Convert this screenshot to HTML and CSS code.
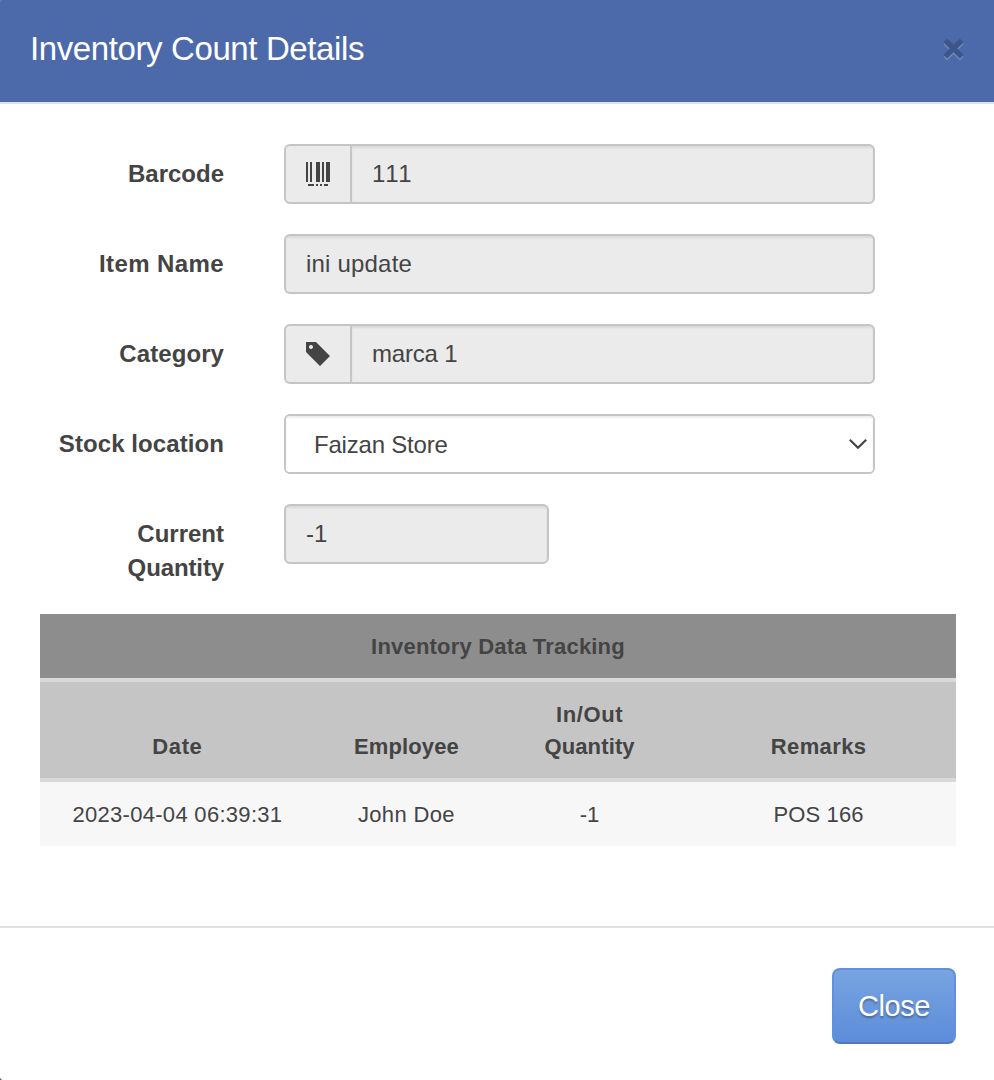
FILE: index.html
```html
<!DOCTYPE html>
<html lang="en">
<head>
<meta charset="utf-8">
<title>Inventory Count Details</title>
<link rel="stylesheet" href="styles.css">
</head>
<body>
<div class="modal">
  <header class="modal-header">
    <h1 class="modal-title">Inventory Count Details</h1>
    <button class="dismiss" type="button" aria-label="Dismiss">
      <svg width="26" height="26" viewBox="0 0 26 26"><path class="cross-light" d="M4.3 6.3l16.4 16.4m0-16.4l-16.4 16.4"/><path class="cross" d="M4.3 4.3l16.4 16.4m0-16.4l-16.4 16.4"/></svg>
    </button>
  </header>
  <main class="modal-body">
    <div class="row">
      <label class="label">Barcode</label>
      <div class="group">
        <span class="addon"><svg width="24" height="24" viewBox="0 0 24 24" shape-rendering="crispEdges"><path d="M0 0h2v20H0zM4 0h2v20H4zM10 0h4v20h-4zM16 0h2v20h-2zM20 0h4v20h-4zM2 22h6v2H2zM10 22h2v2h-2zM14 22h2v2h-2zM18 22h4v2h-4z"/></svg></span>
        <div class="field"><span class="v-code">111</span></div>
      </div>
    </div>
    <div class="row">
      <label class="label"><span class="l-item">Item Name</span></label>
      <div class="group"><div class="field"><span class="v-item">ini update</span></div></div>
    </div>
    <div class="row">
      <label class="label"><span class="l-category">Category</span></label>
      <div class="group">
        <span class="addon"><svg width="24" height="24" viewBox="0 0 24 24"><path fill-rule="evenodd" d="M0 0h10l14 14-10 10L0 10zM5 3a2 2 0 1 0 .01 0z"/></svg></span>
        <div class="field"><span class="v-category">marca 1</span></div>
      </div>
    </div>
    <div class="row">
      <label class="label"><span class="l-category">Stock location</span></label>
      <div class="group"><div class="field select"><span class="v-store">Faizan Store</span>
        <svg width="20" height="12" viewBox="0 0 20 12"><path d="M1.8 1.8L10 9.8l8.2-8"/></svg></div></div>
    </div>
    <div class="row">
      <label class="label">Current<br><span class="l-quantity">Quantity</span></label>
      <div class="group narrow"><div class="field">-1</div></div>
    </div>
    <table class="tracking">
      <colgroup><col class="wide"><col class="slim"><col class="slim"><col class="wide"></colgroup>
      <thead>
        <tr class="caption"><th colspan="4"><span class="t-title">Inventory Data Tracking</span></th></tr>
        <tr class="columns">
          <th><span class="t-date">Date</span></th>
          <th><span class="t-employee">Employee</span></th>
          <th><span class="t-inout">In/Out</span><br><span class="t-employee">Quantity</span></th>
          <th><span class="t-remarks">Remarks</span></th>
        </tr>
      </thead>
      <tbody>
        <tr><td><span class="d-date">2023-04-04 06:39:31</span></td><td><span class="d-name">John Doe</span></td><td>-1</td><td><span class="d-remark">POS 166</span></td></tr>
      </tbody>
    </table>
  </main>
  <footer class="modal-footer"><button class="close" type="button">Close</button></footer>
</div>
</body>
</html>
```
FILE: styles.css
```css
* { box-sizing: border-box; }
body { margin: 0; background: #444; color: #444; font: 24px/34px "Liberation Sans", Arial, sans-serif; }
.modal { height: 1080px; background: #fff; border-radius: 2px 0 0 3px; overflow: hidden; }
.modal-header { height: 104px; padding: 0 27px 5px 30px; display: flex; align-items: center; justify-content: space-between; background: #4c6aaa; border-bottom: 2px solid #e1e1e1; }
.modal-title { margin: 0; color: #fff; font-size: 33px; line-height: 44px; font-weight: 400; letter-spacing: -.39px; }
.dismiss { display: flex; padding: 0; border: 0; background: none; }
.dismiss path { fill: none; stroke-width: 5.2; }
.cross { stroke: #3d5588; }
.cross-light { stroke: #7088bb; }
.modal-body { height: 822px; padding: 40px 38px 0 40px; }
.row { display: flex; min-height: 60px; margin-bottom: 30px; }
.label { width: 184px; margin-right: 60px; padding-top: 13px; text-align: right; font-weight: 700; }
.group { display: flex; width: 591px; height: 60px; border: 2px solid #c5c5c5; border-radius: 6px; background: #ebebeb; overflow: hidden; }
.narrow { width: 265px; }
.addon { width: 66px; padding-right: 1px; display: flex; align-items: center; justify-content: center; border-right: 2px solid #c5c5c5; fill: #444; }
.field { flex: 1; padding: 11px 20px; box-shadow: inset 0 2px 2px rgba(0,0,0,.075); }
.select { display: flex; align-items: center; justify-content: space-between; padding: 0 5px 0 28px; background: #fff; }
.select path { fill: none; stroke: #444; stroke-width: 2.2; }
.l-item { letter-spacing: .4px; }
.l-category { letter-spacing: .08px; }
.l-quantity { letter-spacing: -.12px; }
.v-code { letter-spacing: -.2px; font-kerning: none; }
.v-item { letter-spacing: .2px; }
.v-category { letter-spacing: -.2px; }
.v-store { padding-top: 2px; letter-spacing: -.2px; }
.tracking { width: 916px; border-collapse: separate; border-spacing: 0; table-layout: fixed; margin-top: -1px; text-align: center; font-size: 22px; line-height: 32px; }
.tracking th, .tracking td { padding: 17px 0 15px; }
.tracking th { vertical-align: bottom; border-bottom: 4px solid #d9d9d9; background-clip: padding-box; }
.caption th { background: #8d8d8d; }
.columns th { background: #c5c5c5; }
.wide { width: 30%; }
.slim { width: 20%; }
.tracking td { background: #f7f7f7; }
.t-title { letter-spacing: .19px; }
.t-date { letter-spacing: .6px; }
.t-employee { letter-spacing: .13px; }
.t-inout { letter-spacing: .6px; }
.t-remarks { letter-spacing: .4px; }
.d-date { letter-spacing: .3px; }
.d-name { letter-spacing: .35px; }
.d-remark { letter-spacing: .1px; }
.modal-footer { height: 154px; padding: 40px 38px 0 0; border-top: 2px solid #e1e1e1; display: flex; justify-content: flex-end; }
.close { width: 124px; height: 76px; padding: 0; border: 2px solid #6190dc; border-bottom-color: #4f7abf; border-radius: 8px; background: linear-gradient(#78a4e0, #5d8cda); color: #fff; font: 29px/38px "Liberation Sans", Arial, sans-serif; letter-spacing: -.4px; text-shadow: 0 2px 2px rgba(0,0,0,.3); }
```
